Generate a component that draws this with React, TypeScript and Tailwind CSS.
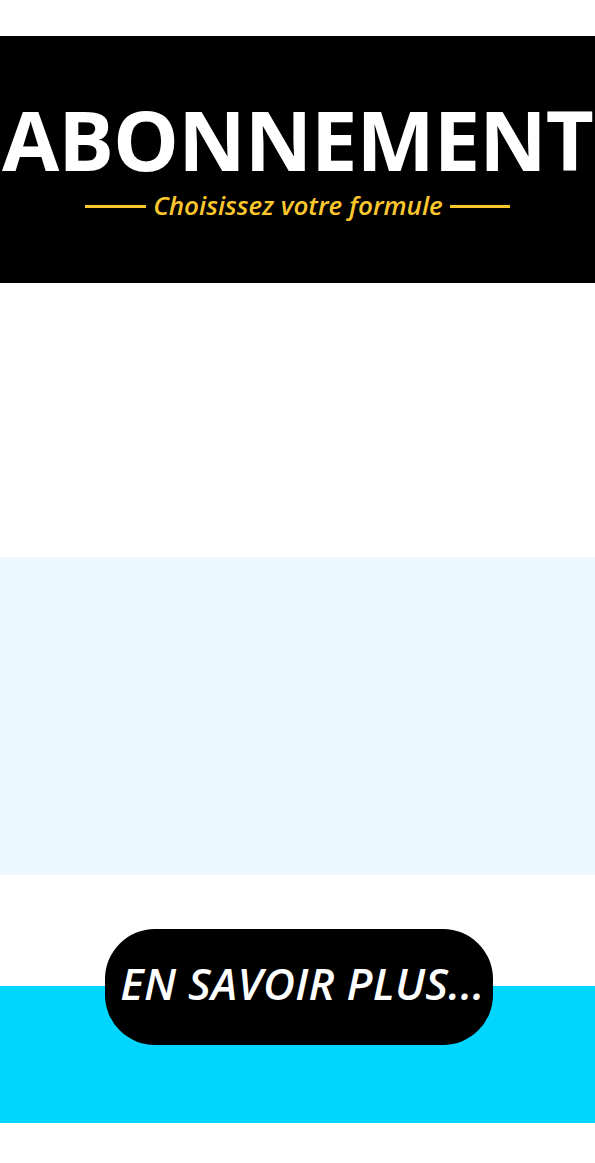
export default function App() {
  return (
    <div className="w-[595px] bg-white" style={{ fontFamily: '"Open Sans", "Liberation Sans", sans-serif' }}>
      <div className="h-[36px] bg-white" />
      <div className="h-[247px] bg-black flex flex-col items-center pt-[68px]">
        <div className="text-white font-bold text-[83px] leading-[70px] tracking-[-1px] whitespace-nowrap">ABONNEMENT</div>
        <div className="flex items-center gap-[7px] mt-[16px]">
          <div className="w-[61px] h-[3px] bg-[#fcc72c] mt-[3px]" />
          <div className="text-[#fcc72c] italic font-semibold text-[26px] leading-[30px]">Choisissez votre formule</div>
          <div className="w-[60px] h-[3px] bg-[#fcc72c] mt-[3px]" />
        </div>
      </div>
      <div className="h-[274px] bg-white" />
      <div className="h-[318px] bg-[#ebf8fe]" />
      <div className="relative">
        <div className="h-[111px] bg-white" />
        <div className="h-[137px] bg-[#00d6ff]" />
        <div className="absolute left-[105px] top-[54px] w-[388px] h-[116px] rounded-[50px] bg-black flex items-center justify-center pl-[7px]">
          <span className="text-white italic font-semibold text-[44px] leading-none tracking-[0.3px] whitespace-nowrap pb-[8px]">EN SAVOIR PLUS...</span>
        </div>
      </div>
      <div className="h-[40px] bg-white" />
    </div>
  );
}
